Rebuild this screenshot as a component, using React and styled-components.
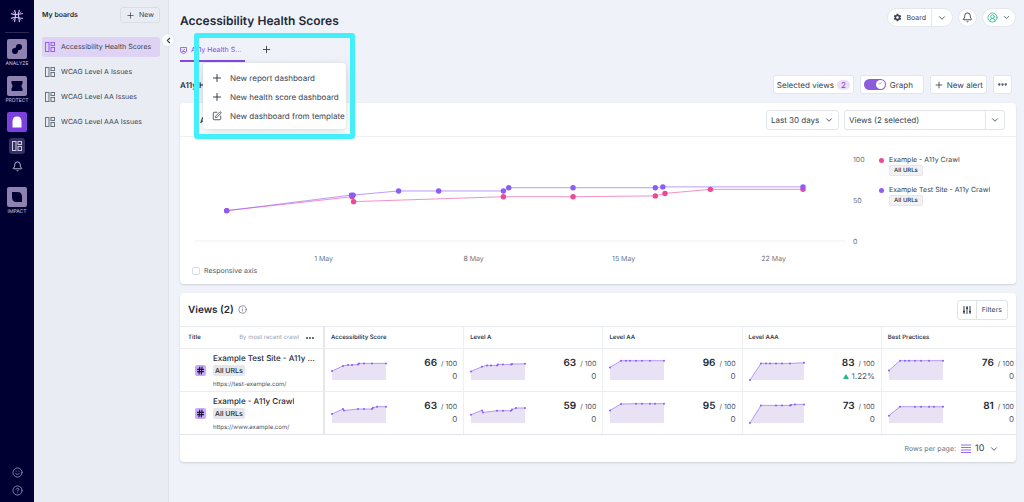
import React from "react"
import styled, { createGlobalStyle } from "styled-components"
import {
  Bell,
  ChevronDown,
  ChevronLeft,
  CircleHelp,
  CircleUserRound,
  Ellipsis,
  Hash,
  Info,
  Plus,
  Smile,
  SquarePen,
} from "lucide-react"
import { IoMdSettings } from "react-icons/io"

const GlobalStyle = createGlobalStyle`
  * {
    box-sizing: border-box;
  }
  body {
    margin: 0;
    background: #eff2f8;
    color: #374151;
    font-family: Inter, "Liberation Sans", sans-serif;
    font-size: 7px;
    line-height: 10px;
    text-rendering: geometricPrecision;
  }
  button, select, input {
    font: inherit;
    color: inherit;
    margin: 0;
    text-rendering: inherit;
  }
  button {
    cursor: pointer;
  }
  h1, h2, h3, p, ul {
    margin: 0;
    padding: 0;
  }
  ul {
    list-style: none;
  }
  a {
    color: inherit;
    text-decoration: none;
  }
  svg {
    flex: none;
    display: block;
  }
`

const Page = styled.div`
  display: flex;
  min-height: 100vh;
`

/* Left rail */

const Rail = styled.nav`
  flex: none;
  width: 34px;
  background: #010033;
  color: #cfc8e6;
  display: flex;
  flex-direction: column;
  align-items: center;
  padding: 9px 0 6px;
`

const RailDivider = styled.hr`
  width: 24px;
  height: 1px;
  margin: 9px 0 6px;
  border: 0;
  background: #2b2a55;
`

const RailLink = styled.a`
  display: flex;
  flex-direction: column;
  align-items: center;
  font-size: 5px;
  line-height: 10px;
  margin-top: ${({ $space }) => $space || 0}px;
  margin-bottom: ${({ $gap }) => $gap}px;
`

const Tile = styled.span`
  display: flex;
  align-items: center;
  justify-content: center;
  width: 20px;
  height: 20px;
  border-radius: 2px;
  background: ${({ $active }) => ($active ? "#7c40dc" : "#8d82b0")};
`

const RailSub = styled.a`
  display: flex;
  align-items: center;
  justify-content: center;
  width: 16px;
  height: 16px;
  margin-bottom: 4px;
  border-radius: 3px;
  background: ${({ $active }) => ($active ? "#34305f" : "transparent")};
`

const RailFooter = styled.div`
  margin-top: auto;
  display: flex;
  flex-direction: column;
  gap: 7px;
  color: #8f88b8;
`

/* Boards sidebar */

const Sidebar = styled.aside`
  position: relative;
  flex: none;
  width: 135px;
  padding: 7px 8px;
  background: #e9edf3;
  border-right: 1px solid #dde1e9;
`

const SidebarHead = styled.div`
  display: flex;
  align-items: center;
  justify-content: space-between;
  margin-bottom: 14px;

  h2 {
    font-size: 7px;
    font-weight: 600;
    color: #1f2937;
  }
`

const OutlineButton = styled.button`
  display: flex;
  align-items: center;
  gap: 4px;
  height: 16px;
  padding: 0 5px;
  border: 1px solid #d9dee6;
  border-radius: 3px;
  background: transparent;
`

const BoardLink = styled.a`
  display: flex;
  align-items: center;
  gap: 6px;
  height: 20px;
  margin-bottom: 5px;
  padding: 0 3px;
  border-radius: 3px;
  white-space: nowrap;
  background: ${({ $active }) => ($active ? "#ded2f5" : "transparent")};

  svg {
    color: ${({ $active }) => ($active ? "#9b5cf0" : "#6b7280")};
  }
`

const CollapseButton = styled.button`
  position: absolute;
  right: -7px;
  top: 33px;
  z-index: 1;
  display: flex;
  align-items: center;
  justify-content: center;
  width: 14px;
  height: 14px;
  padding: 0;
  border: 1px solid #e1e5ec;
  border-radius: 50%;
  background: #fbfcfd;
`

/* Main column */

const Main = styled.main`
  flex: 1;
  min-width: 0;
  padding: 8px 8px 20px 11px;
`

const Header = styled.header`
  display: flex;
  justify-content: space-between;
  height: 32px;

  h1 {
    padding-top: 4px;
    font-size: 12px;
    line-height: 18px;
    font-weight: 600;
    color: #1f2937;
  }
`

const HeaderActions = styled.div`
  display: flex;
  align-items: flex-start;
  gap: 5px;
`

const Pill = styled.div`
  display: flex;
  align-items: center;
  height: 19px;
  border: 1px solid #e3e7ee;
  border-radius: 10px;
  background: #fff;
  overflow: hidden;
`

const PillButton = styled.button`
  display: flex;
  align-items: center;
  justify-content: center;
  gap: 4px;
  height: 100%;
  padding: 0 ${({ $pad }) => $pad}px;
  border: 0;
  border-left: ${({ $split }) => ($split ? "1px solid #e3e7ee" : "0")};
  background: none;
`

const TabBar = styled.div`
  position: relative;
  display: flex;
  align-items: flex-start;
  gap: 16px;
  height: 35px;
`

const Tab = styled.button`
  display: flex;
  align-items: center;
  gap: 4px;
  height: 22px;
  width: 65px;
  padding: 0;
  border: 0;
  border-bottom: 2px solid #8547e0;
  background: none;
  color: #8547e0;
  white-space: nowrap;

  span {
    overflow: hidden;
    text-overflow: ellipsis;
  }
`

const AddTab = styled.button`
  display: flex;
  height: 19px;
  padding: 4px 0;
  border: 0;
  background: none;
`

const Menu = styled.ul`
  position: absolute;
  z-index: 2;
  left: 23px;
  top: 23px;
  width: 143px;
  padding: 5px 0 4px;
  border-radius: 3px;
  background: #fff;
  box-shadow: 0 4px 12px rgba(31, 41, 55, 0.14), 0 0 2px rgba(31, 41, 55, 0.1);
`

const MenuItem = styled.button`
  display: flex;
  align-items: center;
  gap: 7px;
  width: 100%;
  height: 19px;
  padding: 0 0 0 8px;
  border: 0;
  background: none;
  font-size: 8px;
  white-space: nowrap;

  svg {
    width: 12px;
  }
`

const Spotlight = styled.div`
  position: absolute;
  z-index: 3;
  left: 14px;
  top: -7px;
  width: 161px;
  height: 106px;
  border: 5px solid #43effb;
  border-radius: 3px;
  pointer-events: none;
`

const Toolbar = styled.div`
  display: flex;
  align-items: center;
  justify-content: space-between;
  height: 19px;
  margin-bottom: 9px;
  white-space: nowrap;

  h2 {
    font-size: 8px;
    font-weight: 600;
    color: #1f2937;
  }
`

const Row = styled.div`
  display: flex;
  align-items: center;
  gap: ${({ $gap }) => $gap || 5}px;
  padding-right: ${({ $inset }) => $inset || 0}px;
`

const Box = styled.button`
  display: flex;
  align-items: center;
  justify-content: center;
  gap: 3px;
  height: 19px;
  min-width: 19px;
  padding: 0 3px;
  border: 1px solid #e1e5ec;
  border-radius: 3px;
  background: #fff;
  font-size: 8px;
  white-space: nowrap;
`

const Count = styled.span`
  padding: 0 4px;
  border-radius: 6px;
  background: #e9e0f8;
  color: #7c40dc;
`

const SwitchLabel = styled.label`
  display: flex;
  align-items: center;
  gap: 4px;
  width: 64px;
  height: 19px;
  padding: 0 3px;
  border: 1px solid #e1e5ec;
  border-radius: 3px;
  background: #fff;
  font-size: 8px;
`

const Switch = styled.input`
  appearance: none;
  width: 22px;
  height: 11px;
  border-radius: 6px;
  background: #8b5cdb;
  display: flex;
  align-items: center;
  justify-content: flex-end;
  padding: 1px;

  &::after {
    content: "✓";
    width: 9px;
    height: 9px;
    border-radius: 50%;
    background: #fff;
    color: #7c40dc;
    font-size: 5px;
    line-height: 9px;
    text-align: center;
  }
`

const Card = styled.section`
  border-radius: 4px;
  background: #fff;
  box-shadow: 0 1px 2px rgba(31, 41, 55, 0.16);
  margin-bottom: 9px;
  overflow: hidden;
`

const ChartHead = styled.div`
  display: flex;
  align-items: center;
  justify-content: space-between;
  height: 34px;
  padding: 0 11px 0 20px;
  border-bottom: 1px solid #edf0f4;

  h3 {
    font-size: 8px;
    font-weight: 600;
    color: #1f2937;
  }
`

const SelectBox = styled.label`
  display: flex;
  align-items: center;
  gap: 4px;
  height: 20px;
  padding: 0 4px;
  border: 1px solid ${({ $plain }) => ($plain ? "transparent" : "#e1e5ec")};
  border-radius: 3px;
  background: #fff;

  select {
    appearance: none;
    border: 0;
    padding: 0;
    background: none;
    font-size: ${({ $plain }) => ($plain ? 9 : 8)}px;
  }
`

const ViewsPicker = styled.button`
  display: flex;
  align-items: center;
  justify-content: space-between;
  width: 161px;
  height: 20px;
  padding: 0 0 0 4px;
  border: 1px solid #e1e5ec;
  border-radius: 3px;
  background: #fff;
  font-size: 8px;

  svg {
    height: 100%;
    padding: 0 4px;
    box-sizing: content-box;
    border-left: 1px solid #e1e5ec;
  }
`

const ChartBody = styled.div`
  display: flex;
  gap: 8px;
  padding: 13px 8px 0 15px;
`

const Plot = styled.svg`
  flex: 1;
  min-width: 0;
  height: 114px;
  overflow: visible;

  text {
    font-size: 7px;
    fill: #6b7280;
    text-anchor: middle;
  }
`

const YAxis = styled.div`
  display: flex;
  flex-direction: column;
  justify-content: space-between;
  width: 18px;
  height: 92px;
  margin-top: 5px;
  color: #6b7280;
`

const Legend = styled.ul`
  width: 129px;
  padding-top: 5px;

  li {
    display: grid;
    grid-template-columns: 5px 1fr;
    align-items: center;
    justify-items: start;
    column-gap: 5px;
    margin-bottom: 9px;
    white-space: nowrap;
  }
`

const Dot = styled.span`
  width: 5px;
  height: 5px;
  border-radius: 50%;
  background: ${({ $color }) => $color};
`

const Tag = styled.span`
  display: inline-block;
  grid-column: 2;
  padding: 0 ${({ $strong }) => ($strong ? 2 : 4)}px;
  border: ${({ $strong }) => ($strong ? 0 : 1)}px solid #e5e7eb;
  border-radius: 2px;
  background: ${({ $strong }) => ($strong ? "#e5e7eb" : "#f1f2f5")};
  font-size: ${({ $strong }) => ($strong ? 7 : 6)}px;
  line-height: ${({ $strong }) => ($strong ? 11 : 9)}px;
  font-weight: 500;
  color: #1f2937;
`

const AxisOption = styled.label`
  display: flex;
  align-items: center;
  gap: 4px;
  padding: 2px 12px 8px;
  color: #4b5563;

  input {
    appearance: none;
    width: 8px;
    height: 8px;
    border: 1px solid #d9dde4;
    border-radius: 2px;
    background: #fff;
  }
`

/* Views table */

const ViewsHead = styled.div`
  display: flex;
  align-items: center;
  justify-content: space-between;
  height: 33px;
  padding: 0 8px;

  h2 {
    font-size: 10px;
    line-height: 14px;
    font-weight: 600;
    color: #1f2937;
  }
`

const FilterButton = styled.button`
  display: flex;
  align-items: center;
  height: 20px;
  padding: 0;
  border: 1px solid #dfe3ea;
  border-radius: 3px;
  background: #fff;

  svg {
    height: 100%;
    padding: 0 4px;
    box-sizing: content-box;
    border-right: 1px solid #dfe3ea;
  }
  span {
    padding: 0 5px;
  }
`

const TableScroll = styled.div`
  overflow: hidden;
`

/* A little wider than the card, the last column runs under its edge */
const Table = styled.table`
  width: calc(100% + 5px);
  table-layout: fixed;
  border-collapse: separate;
  border-spacing: 0;

  th, td {
    padding: 0 6px 0 6px;
    border-top: 1px solid #e9ecf0;
    border-right: 1px solid #edeff3;
    text-align: left;
  }
  th {
    height: 22px;
    font-size: 6px;
    font-weight: 600;
    color: #374151;
  }
  td {
    height: 43px;
  }
  th:first-child, td:first-child {
    width: 145px;
    padding-left: 8px;
    padding-right: 4px;
    border-right: 2px solid #e5e7eb;
  }
  th:first-child {
    padding-right: 8px;
  }
`

const Between = styled.div`
  display: flex;
  align-items: center;
  justify-content: space-between;
`

const SortNote = styled.span`
  margin-left: auto;
  margin-right: 6px;
  font-weight: 400;
  color: #9ca3af;
`

const ViewCell = styled.div`
  display: flex;
  align-items: center;
  gap: 7px;
  padding-left: 7px;
`

const HashBadge = styled.span`
  flex: none;
  padding: 1px;
  border-radius: 2px;
  background: #c9aaf8;
  color: #1b1340;
`

const ViewText = styled.div`
  min-width: 0;
  display: flex;
  flex-direction: column;
  align-items: flex-start;
  gap: 2px;
  padding-top: 2px;

  strong {
    max-width: 100%;
    overflow: hidden;
    text-overflow: ellipsis;
    white-space: nowrap;
    font-size: 8px;
    font-weight: 500;
    color: #1f2937;
  }
  a {
    padding-top: 2px;
    font-size: 6px;
    color: #4b5563;
  }
`

const Score = styled.div`
  text-align: right;
  color: #4b5563;
  white-space: nowrap;
  line-height: 13px;

  b {
    margin-right: 2px;
    font-size: 10px;
    font-weight: 600;
    color: #1f2937;
  }
`

const Change = styled.p`
  font-size: 8px;
`

const Up = styled.span`
  display: inline-block;
  margin-right: 3px;
  border: 3px solid transparent;
  border-top: 0;
  border-bottom: 5px solid #22b882;
`

const TableFooter = styled.div`
  display: flex;
  align-items: center;
  justify-content: flex-end;
  height: 28px;
  padding-right: 12px;
  border-top: 1px solid #e1e4e9;
  color: #6b7280;

  svg, select {
    color: #374151;
  }
`

const BoardIcon = ({ size = 10 }) => (
  <svg width={size} height={size} viewBox="0 0 20 20" fill="none" stroke="currentColor" strokeWidth="2">
    <rect x="1" y="1" width="7" height="18" />
    <rect x="12" y="1" width="7" height="6" />
    <rect x="12" y="11" width="7" height="8" />
  </svg>
)

const LogoIcon = () => (
  <svg width="14" height="14" viewBox="0 0 28 28" fill="none" stroke="#d3baf7">
    <path d="M9 2q3 6 2 12T9 26M19 2q-3 6-2 12T19 26" strokeWidth="2.400" />
    <path d="M2 9q6 3 12 2T26 9M2 19q6-3 12-2T26 19" strokeWidth="2.400" />
    <path d="M5 5l4 4M23 5l-4 4M5 23l4-4M23 23l-4-4" strokeWidth="1.200" />
  </svg>
)

const AnalyzeIcon = () => (
  <svg width="12" height="12" viewBox="0 0 24 24" fill="#010033">
    <circle cx="16" cy="8" r="6" />
    <circle cx="8" cy="16" r="6" />
    <path d="M8 10q3-1 3-4l10 5q-7 1-7 6l-8 2z" />
  </svg>
)

const ProtectIcon = () => (
  <svg width="12" height="12" viewBox="0 0 24 24" fill="#010033">
    <path d="M1 2h22v5q-4 5 0 10v5H1v-5q4-5 0-10z" />
  </svg>
)

const DoorIcon = () => (
  <svg width="12" height="12" viewBox="0 0 24 24" fill="#fff">
    <path d="M3 23V11Q3 1 12 1t9 10v12z" />
  </svg>
)

const ImpactIcon = () => (
  <svg width="12" height="12" viewBox="0 0 24 24" fill="#010033">
    <path d="M2 2h11q9 0 9 10v10H11Q2 22 2 12z" />
  </svg>
)

const ShieldTabIcon = () => (
  <svg width="7" height="7" viewBox="0 0 14 14" fill="none" stroke="currentColor" strokeWidth="1.500">
    <path d="M1 1h12v8q0 2-6 4-6-2-6-4zM4 5l2 2 4-3M3 9h8" />
  </svg>
)

const SlidersIcon = () => (
  <svg width="10" height="9" viewBox="0 0 20 18" fill="none" stroke="currentColor" strokeWidth="2">
    <path d="M4 1v16M10 1v16M16 1v16" />
    <path d="M2 12h4M8 5h4M14 12h4" strokeWidth="3.500" />
  </svg>
)

const LinesIcon = () => (
  <svg width="10" height="10" viewBox="0 0 10 10" stroke="#9b6cf0" strokeWidth="1">
    <path d="M0 1h10M0 3.500h10M0 6h10M0 8.500h10" />
  </svg>
)

const boards = [
  "Accessibility Health Scores",
  "WCAG Level A Issues",
  "WCAG Level AA Issues",
  "WCAG Level AAA Issues",
]

const menuItems = [
  { icon: Plus, size: 12, label: "New report dashboard" },
  { icon: Plus, size: 12, label: "New health score dashboard" },
  { icon: SquarePen, size: 10, label: "New dashboard from template" },
]

// [days since 25 April, score]
const series = [
  {
    name: "Example - A11y Crawl",
    color: "#ec4899",
    points: [
      [1.48, 37], [7.33, 54], [7.4, 48], [14.39, 54], [17.64, 54],
      [21.48, 55], [21.93, 58], [24.05, 63], [28.37, 63],
    ],
  },
  {
    name: "Example Test Site - A11y Crawl",
    color: "#8b5cf6",
    points: [
      [1.48, 37], [7.3, 56], [7.38, 56], [9.5, 61], [11.37, 61], [14.39, 61],
      [14.64, 65], [17.64, 65], [21.48, 65], [21.83, 66], [28.37, 66],
    ],
  },
]

const ticks = [
  { day: 6, label: "1 May" },
  { day: 13, label: "8 May" },
  { day: 20, label: "15 May" },
  { day: 27, label: "22 May" },
]

const DAYS = 30.33
const toX = day => (day / DAYS) * 100
const toY = score => 91 - score * 0.82

const Chart = () => (
  <Plot role="img" aria-label="Scores over the last 30 days">
    <line x1="0" x2="100%" y1="91" y2="91" stroke="#eceef2" />
    <svg width="100%" height="114" viewBox="0 0 100 114" preserveAspectRatio="none">
      {series.map(s => (
        <polyline
          key={s.name}
          points={s.points.map(([d, v]) => `${toX(d)},${toY(v)}`).join(" ")}
          fill="none"
          stroke={s.color}
          strokeOpacity="0.6"
          vectorEffect="non-scaling-stroke"
        />
      ))}
    </svg>
    {series.map(s =>
      s.points.map(([d, v]) => (
        <circle key={s.name + d} cx={`${toX(d)}%`} cy={toY(v)} r="2.7" fill={s.color} />
      ))
    )}
    {ticks.map(t => (
      <text key={t.label} x={`${toX(t.day)}%`} y="111">
        {t.label}
      </text>
    ))}
  </Plot>
)

const columns = ["Accessibility Score", "Level A", "Level AA", "Level AAA", "Best Practices"]

const views = [
  {
    name: "Example Test Site - A11y Crawl",
    url: "https://test-example.com/",
    scores: [
      { value: 66, line: [[0, 9], [11, 14], [16, 15], [20, 15], [26, 15.5], [27, 16.6], [32, 16.6], [40, 16.6], [54, 16.6]] },
      { value: 63, line: [[0, 8.6], [11, 13.3], [16, 14.6], [20, 14.6], [26, 14.6], [27, 15.6], [32, 15.6], [40, 15.6], [41, 16], [54, 16.2]] },
      { value: 96, line: [[0, 12.6], [11, 19.3], [16, 19.3], [20, 19.3], [26, 19.3], [32, 19.3], [40, 19.3], [54, 19.3]] },
      { value: 83, change: "1.22%", line: [[0, 0], [11, 16.6], [16, 16.6], [20, 16.6], [26, 16.6], [32, 16.6], [40, 16.6], [54, 17.2]] },
      { value: 76, line: [[0, 9.6], [11, 19.3], [16, 19.3], [20, 19.3], [26, 19.3], [32, 19.3], [40, 19.3], [54, 19.3]] },
    ],
  },
  {
    name: "Example - A11y Crawl",
    url: "https://www.example.com/",
    scores: [
      { value: 63, line: [[0, 9], [11, 14], [12, 12.5], [26, 14], [32, 14], [40, 14], [41, 15.2], [45, 16.3], [54, 16.3]] },
      { value: 59, line: [[0, 8.3], [11, 12.6], [12, 10.6], [26, 12.3], [32, 12.3], [40, 12.3], [41, 13.4], [45, 15], [54, 15]] },
      { value: 95, line: [[0, 12.6], [11, 19], [26, 19.3], [32, 19.3], [40, 19.3], [45, 19.3], [54, 19.3]] },
      { value: 73, line: [[0, 0], [11, 17.6], [26, 17.6], [32, 17.6], [40, 17.6], [41, 18], [45, 18.6], [54, 18.6]] },
      { value: 81, line: [[0, 7.3], [11, 16.3], [26, 16.3], [32, 16.3], [40, 16.3], [45, 16.3], [54, 16.3]] },
    ],
  },
]

const Sparkline = ({ line }) => {
  const pts = line.map(([x, h]) => [x + 1, 21 - h])
  const path = pts.map(p => p.join(",")).join(" ")
  return (
    <svg width="56" height="23" viewBox="0 0 56 23" aria-hidden="true">
      <polygon points={`1,21 ${path} 55,21`} fill="#e9e2f5" />
      <polyline points={path} fill="none" stroke="#a682f3" strokeWidth="0.8" />
      {pts.map(([x, y]) => (
        <circle key={x} cx={x} cy={y} r="1" fill="#8b5cf6" />
      ))}
    </svg>
  )
}

const App = () => (
  <>
    <GlobalStyle />
    <Page>
      <Rail aria-label="Products">
        <LogoIcon />
        <RailDivider />
        <RailLink href="#analyze" $gap={7}>
          <Tile><AnalyzeIcon /></Tile>
          ANALYZE
        </RailLink>
        <RailLink href="#protect" $gap={6}>
          <Tile><ProtectIcon /></Tile>
          PROTECT
        </RailLink>
        <RailLink href="#monitor" aria-label="Monitor" $gap={6}>
          <Tile $active><DoorIcon /></Tile>
        </RailLink>
        <RailSub href="#boards" aria-label="Boards" $active><BoardIcon /></RailSub>
        <RailSub href="#alerts" aria-label="Alerts"><Bell size={11} /></RailSub>
        <RailLink href="#impact" $space={9} $gap={0}>
          <Tile><ImpactIcon /></Tile>
          IMPACT
        </RailLink>
        <RailFooter>
          <a href="#feedback" aria-label="Feedback"><Smile size={11} /></a>
          <a href="#help" aria-label="Help"><CircleHelp size={11} /></a>
        </RailFooter>
      </Rail>

      <Sidebar>
        <SidebarHead>
          <h2>My boards</h2>
          <OutlineButton><Plus size={9} /> New</OutlineButton>
        </SidebarHead>
        {boards.map((name, i) => (
          <BoardLink key={name} href="#board" $active={i === 0}>
            <BoardIcon />
            {name}
          </BoardLink>
        ))}
        <CollapseButton aria-label="Collapse sidebar">
          <ChevronLeft size={9} strokeWidth={3} />
        </CollapseButton>
      </Sidebar>

      <Main>
        <Header>
          <h1>Accessibility Health Scores</h1>
          <HeaderActions>
            <Pill>
              <PillButton $pad={5}><IoMdSettings size={9} /> Board</PillButton>
              <PillButton $pad={5} $split aria-label="Board options"><ChevronDown size={10} /></PillButton>
            </Pill>
            <Pill>
              <PillButton $pad={3} aria-label="Notifications"><Bell size={11} /></PillButton>
            </Pill>
            <Pill>
              <PillButton $pad={4} aria-label="Account">
                <CircleUserRound size={11} color="#3fbf95" />
                <ChevronDown size={9} />
              </PillButton>
            </Pill>
          </HeaderActions>
        </Header>

        <TabBar>
          <Tab><ShieldTabIcon /><span>A11y Health Scores</span></Tab>
          <AddTab aria-label="Add dashboard"><Plus size={11} /></AddTab>
          <Menu>
            {menuItems.map(({ icon: Icon, size, label }) => (
              <li key={label}>
                <MenuItem><Icon size={size} />{label}</MenuItem>
              </li>
            ))}
          </Menu>
          <Spotlight />
        </TabBar>

        <Toolbar>
          <h2>A11y Health Scores</h2>
          <Row $gap={6} $inset={4}>
            <Box>Selected views <Count>2</Count></Box>
            <SwitchLabel>
              <Switch type="checkbox" role="switch" defaultChecked />
              Graph
            </SwitchLabel>
            <Box><Plus size={10} /> New alert</Box>
            <Box aria-label="More"><Ellipsis size={11} strokeWidth={3} /></Box>
          </Row>
        </Toolbar>

        <Card>
          <ChartHead>
            <h3>A11y</h3>
            <Row>
              <SelectBox>
                <select aria-label="Period" defaultValue="30">
                  <option value="30">Last 30 days</option>
                </select>
                <ChevronDown size={10} />
              </SelectBox>
              <ViewsPicker>
                Views (2 selected)
                <ChevronDown size={10} />
              </ViewsPicker>
            </Row>
          </ChartHead>
          <ChartBody>
            <Chart />
            <YAxis>
              <span>100</span>
              <span>50</span>
              <span>0</span>
            </YAxis>
            <Legend>
              {series.map(s => (
                <li key={s.name}>
                  <Dot $color={s.color} />
                  {s.name}
                  <Tag>All URLs</Tag>
                </li>
              ))}
            </Legend>
          </ChartBody>
          <AxisOption>
            <input type="checkbox" />
            Responsive axis
          </AxisOption>
        </Card>

        <Card>
          <ViewsHead>
            <Row $gap={4}>
              <h2>Views (2)</h2>
              <Info size={9} color="#6b7280" />
            </Row>
            <FilterButton>
              <SlidersIcon />
              <span>Filters</span>
            </FilterButton>
          </ViewsHead>
          <TableScroll>
            <Table>
              <thead>
                <tr>
                  <th>
                    <Between>
                      Title
                      <SortNote>By most recent crawl</SortNote>
                      <Ellipsis size={10} strokeWidth={3} />
                    </Between>
                  </th>
                  {columns.map(c => (
                    <th key={c}>{c}</th>
                  ))}
                </tr>
              </thead>
              <tbody>
                {views.map(view => (
                  <tr key={view.url}>
                    <td>
                      <ViewCell>
                        <HashBadge><Hash size={9} strokeWidth={3} /></HashBadge>
                        <ViewText>
                          <strong>{view.name}</strong>
                          <Tag $strong>All URLs</Tag>
                          <a href={view.url}>{view.url}</a>
                        </ViewText>
                      </ViewCell>
                    </td>
                    {view.scores.map((score, i) => (
                      <td key={columns[i]}>
                        <Between>
                          <Sparkline line={score.line} />
                          <Score>
                            <b>{score.value}</b> / 100
                            <Change>
                              {score.change ? <><Up />{score.change}</> : "0"}
                            </Change>
                          </Score>
                        </Between>
                      </td>
                    ))}
                  </tr>
                ))}
              </tbody>
            </Table>
          </TableScroll>
          <TableFooter>
            Rows per page:
            <SelectBox $plain>
              <LinesIcon />
              <select aria-label="Rows per page" defaultValue="10">
                <option value="10">10</option>
              </select>
              <ChevronDown size={10} />
            </SelectBox>
          </TableFooter>
        </Card>
      </Main>
    </Page>
  </>
)

export default App
